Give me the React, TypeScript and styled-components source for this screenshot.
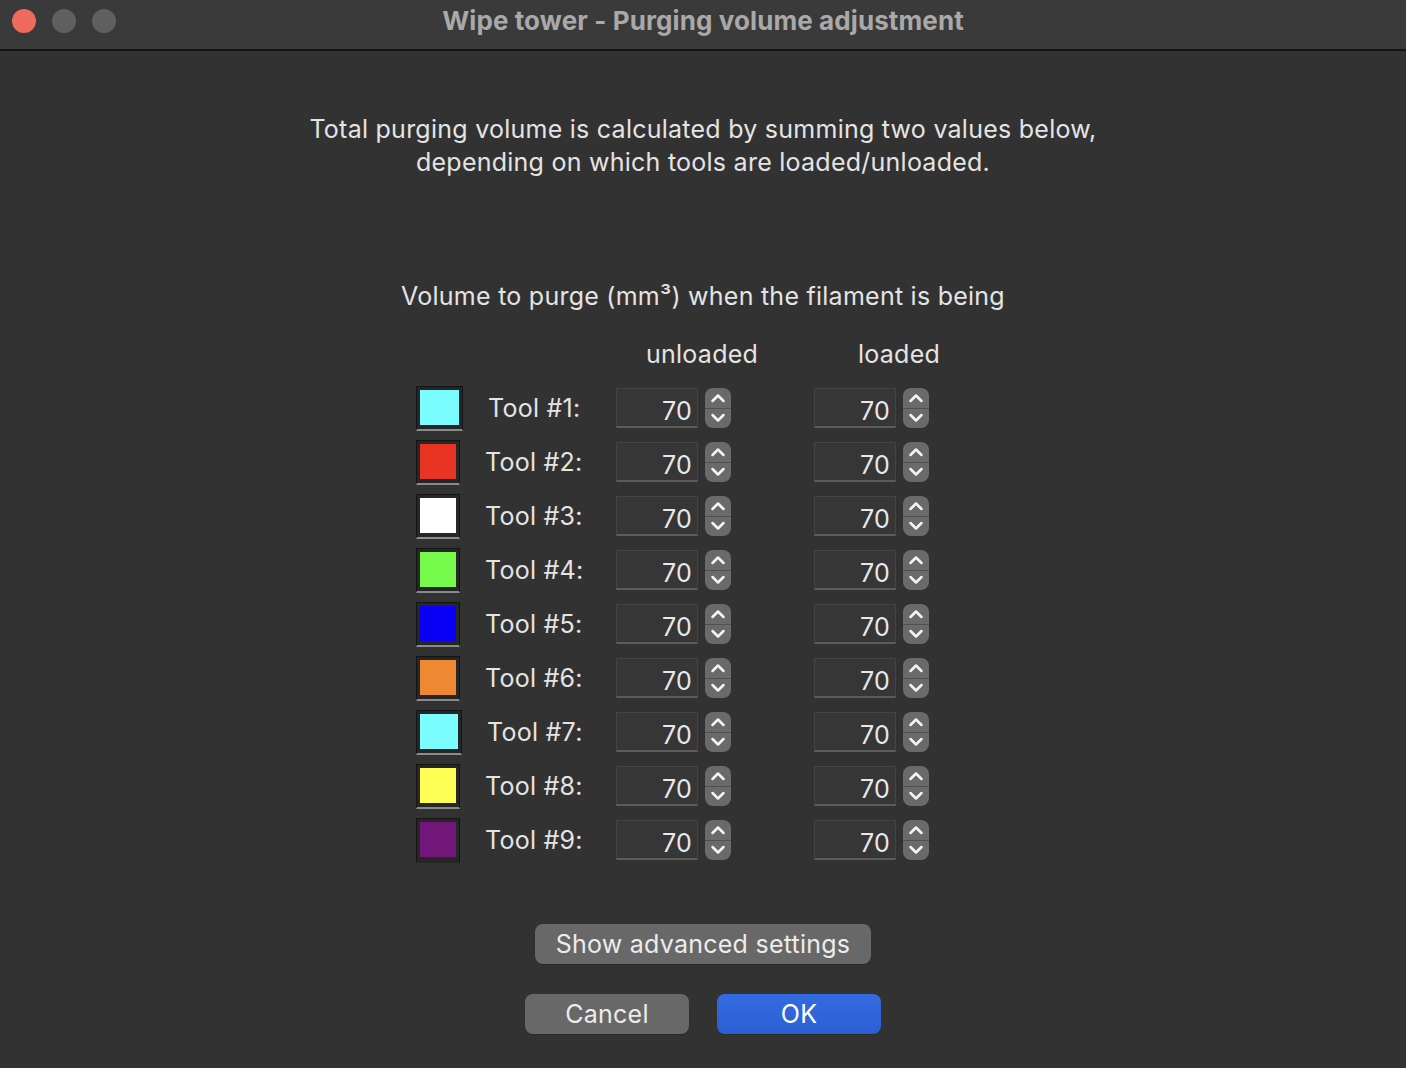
import React from "react";
import styled, { createGlobalStyle } from "styled-components";

const GlobalStyle = createGlobalStyle`
  html, body {
    margin: 0;
    padding: 0;
    background: #323232;
  }
  body {
    font-family: Inter, "Noto Sans", "Liberation Sans", sans-serif;
    -webkit-font-smoothing: antialiased;
  }
`;

type Tool = { color: string; width: number };

const TOOLS: Tool[] = [
  { color: "#7bfcfe", width: 47 },
  { color: "#e93323", width: 44 },
  { color: "#ffffff", width: 44 },
  { color: "#76fa4c", width: 44 },
  { color: "#0a00f5", width: 44 },
  { color: "#ef8833", width: 44 },
  { color: "#7bfcfe", width: 46 },
  { color: "#fefe54", width: 44 },
  { color: "#72167a", width: 44 },
];

function Chevron({ up }: { up?: boolean }) {
  return (
    <svg width="16" height="10" viewBox="0 0 16 10">
      <path
        d={up ? "M2.5 8 L8 2.5 L13.5 8" : "M2.5 2 L8 7.5 L13.5 2"}
        fill="none"
        stroke="#f4f4f4"
        strokeWidth="2.5"
        strokeLinecap="round"
        strokeLinejoin="round"
      />
    </svg>
  );
}

function NumberField({ value }: { value: number }) {
  return (
    <Field>
      <Input>{value}</Input>
      <Spin>
        <SpinHalf>
          <Chevron up />
        </SpinHalf>
        <SpinDivider />
        <SpinHalf>
          <Chevron />
        </SpinHalf>
      </Spin>
    </Field>
  );
}

function App() {
  return (
    <Window>
      <GlobalStyle />
      <TitleBar>
        <Lights>
          <Light color="#ee6a5e" />
          <Light color="#5f5f5f" />
          <Light color="#5f5f5f" />
        </Lights>
        <Title>Wipe tower - Purging volume adjustment</Title>
      </TitleBar>
      <Content>
        <Intro>
          Total purging volume is calculated by summing two values below,
          <br />
          depending on which tools are loaded/unloaded.
        </Intro>
        <Caption>Volume to purge (mm³) when the filament is being</Caption>
        <Table>
          <HeaderRow>
            <span />
            <ColHead pad={30}>unloaded</ColHead>
            <ColHead pad={44}>loaded</ColHead>
          </HeaderRow>
          {TOOLS.map((tool, i) => (
            <Row key={i}>
              <ToolCell>
                <Swatch w={tool.width} underline={i < TOOLS.length - 1}>
                  <SwatchFill color={tool.color} />
                </Swatch>
                <ToolLabel>Tool #{i + 1}:</ToolLabel>
              </ToolCell>
              <NumberField value={70} />
              <NumberField value={70} />
            </Row>
          ))}
        </Table>
        <AdvancedButton>Show advanced settings</AdvancedButton>
        <Actions>
          <DialogButton>Cancel</DialogButton>
          <DialogButton primary>OK</DialogButton>
        </Actions>
      </Content>
    </Window>
  );
}

const Window = styled.div`
  width: 1406px;
  height: 1068px;
  background: #323232;
  color: #e4e4e4;
  overflow: hidden;
  font-size: 25px;
  letter-spacing: 0.25px;
`;

const TitleBar = styled.header`
  position: relative;
  height: 49px;
  background: #3a3a3a;
  border-bottom: 2px solid #141414;
  display: flex;
  align-items: center;
  justify-content: center;
`;

const Lights = styled.div`
  position: absolute;
  left: 12px;
  top: 9px;
  display: flex;
  gap: 16px;
`;

const Light = styled.span<{ color: string }>`
  width: 24px;
  height: 24px;
  border-radius: 50%;
  background: ${({ color }) => color};
`;

const Title = styled.h1`
  margin: 0 0 8px 0;
  font-size: 26px;
  font-weight: 700;
  color: #a9a9a9;
  letter-spacing: 0.1px;
`;

const Content = styled.main`
  display: flex;
  flex-direction: column;
  align-items: center;
  padding-top: 62px;
`;

const Intro = styled.p`
  margin: 0;
  line-height: 33px;
  text-align: center;
`;

const Caption = styled.p`
  margin: 101px 0 0 0;
  line-height: 33px;
`;

const Table = styled.div`
  width: 574px;
  margin-top: 25px;
  display: flex;
  flex-direction: column;
`;

const HeaderRow = styled.div`
  display: grid;
  grid-template-columns: 200px 198px 176px;
  height: 33px;
  margin-bottom: 10px;
`;

const ColHead = styled.span<{ pad: number }>`
  padding-left: ${({ pad }) => pad}px;
  line-height: 33px;
`;

const Row = styled.div`
  display: grid;
  grid-template-columns: 200px 198px 176px;
  align-items: center;
  height: 54px;
`;

const ToolCell = styled.div`
  display: flex;
  align-items: center;
  gap: 25px;
`;

const Swatch = styled.div<{ w: number; underline: boolean }>`
  box-sizing: border-box;
  width: ${({ w }) => w}px;
  height: 45px;
  padding: 3px 3px 4px 3px;
  background: #262626;
  border: 1px solid #141414;
  border-bottom: 2px solid ${({ underline }) => (underline ? "#8a8a8a" : "#262626")};
  margin-top: 1px;
`;

const SwatchFill = styled.div<{ color: string }>`
  width: 100%;
  height: 100%;
  background: ${({ color }) => color};
`;

const ToolLabel = styled.span`
  line-height: 33px;
  color: #e4e4e4;
`;

const Field = styled.div`
  display: flex;
  align-items: center;
  gap: 7px;
`;

const Input = styled.div`
  box-sizing: border-box;
  width: 82px;
  height: 40px;
  padding: 5px 5px 0 0;
  background: #363636;
  border: 1px solid #444444;
  border-bottom: 2px solid #5c5c5c;
  text-align: right;
  line-height: 34px;
  color: #e8e8e8;
`;

const Spin = styled.div`
  width: 26px;
  height: 40px;
  border-radius: 8px;
  background: #6a6a6a;
  display: flex;
  flex-direction: column;
  overflow: hidden;
`;

const SpinHalf = styled.div`
  flex: 1;
  display: flex;
  align-items: center;
  justify-content: center;
`;

const SpinDivider = styled.div`
  height: 1px;
  background: #505050;
`;

const AdvancedButton = styled.button`
  margin-top: 57px;
  width: 336px;
  height: 40px;
  border: none;
  border-radius: 8px;
  background: #686868;
  color: #ececec;
  font-family: inherit;
  font-size: 25px;
  letter-spacing: 0.25px;
  padding: 0;
  box-shadow: 0 1px 0 #2a2a2a;
`;

const Actions = styled.div`
  margin-top: 30px;
  display: flex;
  gap: 28px;
`;

const DialogButton = styled.button<{ primary?: boolean }>`
  width: 164px;
  height: 40px;
  border: none;
  border-radius: 8px;
  background: ${({ primary }) =>
    primary ? "linear-gradient(#346be0, #2c5fd4)" : "#686868"};
  color: ${({ primary }) => (primary ? "#ffffff" : "#ececec")};
  font-family: inherit;
  font-size: 25px;
  letter-spacing: 0.25px;
  padding: 0;
  box-shadow: 0 1px 0 #2a2a2a;
`;

export default App;
